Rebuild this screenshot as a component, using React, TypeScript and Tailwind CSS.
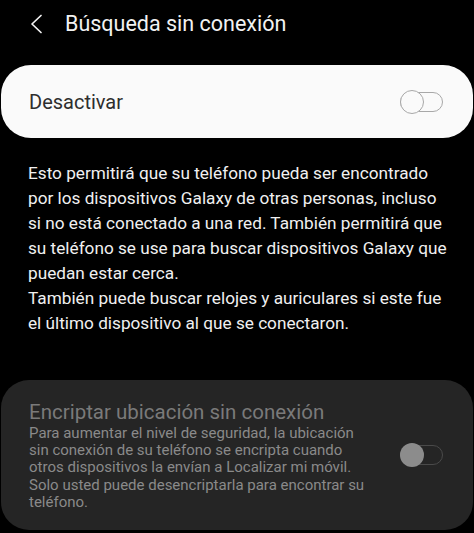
import React from "react";

const font = { fontFamily: "Roboto, 'Noto Sans', sans-serif" };

export default function App() {
  return (
    <div className="w-[474px] h-[533px] bg-black overflow-hidden" style={font}>
      <div className="flex items-center h-[48px] pl-[29px]">
        <svg width="14" height="20" viewBox="0 0 14 20" className="mr-[22px]">
          <path d="M12 1.5 L3 10 L12 18.5" fill="none" stroke="#f2f2f2" strokeWidth="1.7" strokeLinecap="round" strokeLinejoin="round" />
        </svg>
        <div className="text-[21.5px] text-[#f2f2f2] leading-none">Búsqueda sin conexión</div>
      </div>

      <div className="mt-[17px] mx-[1px] h-[73px] rounded-[30px] bg-[#fafafa] flex items-center justify-between pl-[28px] pr-[30px]">
        <div className="text-[20px] text-[#2e2e2e]">Desactivar</div>
        <div className="relative w-[43px] h-[24px]">
          <div className="absolute left-0 top-[2px] w-[43px] h-[20px] rounded-full border-[1.5px] border-[#a8a8a8]" />
          <div className="absolute left-0 top-0 w-[24px] h-[24px] rounded-full border-[1.5px] border-[#a8a8a8] bg-[#fafafa]" />
        </div>
      </div>

      <div className="mt-[23px] pl-[28px] pr-[20px] text-[17.2px] leading-[25px] text-[#f0f0f0]">
        Esto permitirá que su teléfono pueda ser encontrado
        <br />
        por los dispositivos Galaxy de otras personas, incluso
        <br />
        si no está conectado a una red. También permitirá que
        <br />
        su teléfono se use para buscar dispositivos Galaxy que
        <br />
        puedan estar cerca.
        <br />
        También puede buscar relojes y auriculares si este fue
        <br />
        el último dispositivo al que se conectaron.
      </div>

      <div className="mt-[44px] mx-[1px] h-[150px] rounded-[28px] bg-[#252525] flex items-center justify-between pl-[28px] pr-[30px]">
        <div className="flex flex-col">
          <div className="text-[20.5px] leading-[26px] text-[#7a7a7a]">Encriptar ubicación sin conexión</div>
          <div className="text-[15px] leading-[17.3px] text-[#8a8a8a]">
            Para aumentar el nivel de seguridad, la ubicación
            <br />
            sin conexión de su teléfono se encripta cuando
            <br />
            otros dispositivos la envían a Localizar mi móvil.
            <br />
            Solo usted puede desencriptarla para encontrar su
            <br />
            teléfono.
          </div>
        </div>
        <div className="relative w-[43px] h-[24px] shrink-0">
          <div className="absolute left-0 top-[2px] w-[43px] h-[20px] rounded-full border-[1.5px] border-[#4a4a4a]" />
          <div className="absolute left-0 top-0 w-[24px] h-[24px] rounded-full bg-[#8c8c8c]" />
        </div>
      </div>
    </div>
  );
}
